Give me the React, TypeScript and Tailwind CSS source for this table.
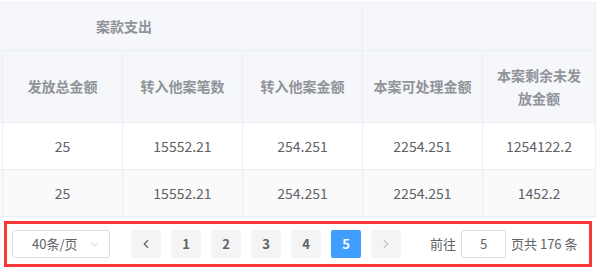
import { ChevronDown, ChevronLeft, ChevronRight } from 'lucide-react'

const FONT = { fontFamily: '"Noto Sans CJK SC", "Noto Sans", sans-serif' }

const rows = [
  ['25', '15552.21', '254.251', '2254.251', '1254122.2'],
  ['25', '15552.21', '254.251', '2254.251', '1452.2'],
]

const cols = 'grid-cols-[3px_120px_120px_120px_120px_112px]'

export default function App() {
  return (
    <div className="w-[601px] h-[275px] bg-white overflow-hidden pt-[2px]" style={FONT}>
      <div className="w-[596px] border-t border-r border-[#ebeef5]">
        {/* header row 1 */}
        <div className={`grid ${cols} h-[48px] bg-[#f5f7fa] border-b border-[#ebeef5] text-[14px] font-bold text-[#909399]`}>
          <div className="col-span-4 relative border-r border-[#ebeef5]">
            <span className="absolute left-[96px] top-[13px]">案款支出</span>
          </div>
          <div className="col-span-2" />
        </div>
        {/* header row 2 */}
        <div className={`grid ${cols} h-[72px] bg-[#f5f7fa] border-b border-[#ebeef5] text-[14px] font-bold text-[#909399]`}>
          <div className="border-r border-[#ebeef5]" />
          {['发放总金额', '转入他案笔数', '转入他案金额', '本案可处理金额'].map(t => (
            <div key={t} className="flex items-center justify-center border-r border-[#ebeef5]">{t}</div>
          ))}
          <div className="flex items-center justify-center text-center leading-[23px] px-2">本案剩余未发放金额</div>
        </div>
        {rows.map((r, i) => (
          <div
            key={i}
            className={`grid ${cols} h-[47px] border-b border-[#ebeef5] text-[14px] text-[#606266] ${i === 1 ? 'bg-[#fafafa]' : 'bg-white'}`}
          >
            <div className="border-r border-[#ebeef5]" />
            {r.map((v, j) => (
              <div key={j} className={`flex items-center justify-center ${j < 4 ? 'border-r border-[#ebeef5]' : ''}`}>{v}</div>
            ))}
          </div>
        ))}
      </div>

      {/* pagination */}
      <div className="ml-[4px] mt-[4px] w-[588px] h-[46px] border-[3px] border-[#f53838] flex items-center text-[13px] text-[#606266]">
        <div className="ml-[5px] w-[98px] h-[28px] border border-[#dcdfe6] rounded-[3px] flex items-center pl-[19px] pr-[8px] justify-between">
          <span>40条/页</span>
          <ChevronDown size={13} strokeWidth={1.5} className="text-[#c0c4cc]" />
        </div>
        <div className="ml-[21px] flex gap-[10px]">
          <div className="w-[30px] h-[28px] rounded-[2px] bg-[#f4f4f5] flex items-center justify-center text-[#606266]">
            <ChevronLeft size={14} strokeWidth={2} />
          </div>
          {[1, 2, 3, 4, 5].map(n => (
            <div
              key={n}
              className={`w-[30px] h-[28px] rounded-[2px] flex items-center justify-center font-bold ${n === 5 ? 'bg-[#409eff] text-white' : 'bg-[#f4f4f5] text-[#606266]'}`}
            >
              {n}
            </div>
          ))}
          <div className="w-[30px] h-[28px] rounded-[2px] bg-[#f4f4f5] flex items-center justify-center text-[#c0c4cc]">
            <ChevronRight size={14} strokeWidth={2} />
          </div>
        </div>
        <span className="ml-[29px]">前往</span>
        <div className="ml-[5px] w-[45px] h-[28px] border border-[#dcdfe6] rounded-[3px] flex items-center justify-center">5</div>
        <span className="ml-[5px]">页共 176 条</span>
      </div>
    </div>
  )
}
